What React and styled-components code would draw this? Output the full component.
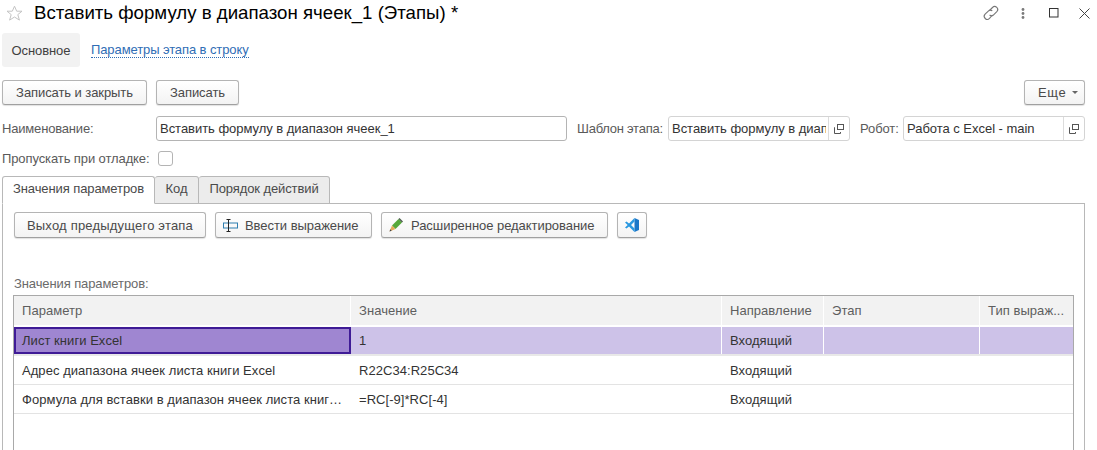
import React from "react";
import styled, { createGlobalStyle } from "styled-components";

const Global = createGlobalStyle`
  html, body { margin: 0; padding: 0; background: #fff; height: 450px; overflow: hidden; }
  body { font-family: "Liberation Sans", Arial, sans-serif; font-size: 13px; color: #4a4a4a; letter-spacing: -0.1px; }
  * { box-sizing: border-box; }
`;

const Page = styled.div`
  width: 1097px;
  height: 450px;
  overflow: hidden;
  display: flex;
  flex-direction: column;
  padding: 0 12px 0 2px;
`;
const TitleBar = styled.div`
  height: 28px;
  display: flex;
  align-items: center;
  padding: 0 0 2px 4px;
`;
const Title = styled.h1`
  margin: 0 0 0 11px;
  font-size: 18.67px;
  font-weight: 400;
  letter-spacing: 0;
  color: #000;
  flex: 1;
  white-space: nowrap;
`;
const WinIcons = styled.div`
  display: flex;
  align-items: center;
  margin-right: -13px;
`;
const WinIcon = styled.span`
  width: ${p => p.$w}px;
  height: 16px;
  display: flex;
  align-items: center;
  justify-content: center;
`;
const Sections = styled.div`
  height: 34px;
  margin-top: 5px;
  display: flex;
  align-items: center;
`;
const ActiveSection = styled.div`
  width: 78px;
  height: 34px;
  background: #f2f2f2;
  border-radius: 3px;
  display: flex;
  align-items: center;
  justify-content: center;
  color: #3f3f3f;
`;
const SectionLink = styled.a`
  margin: 1px 0 0 11px;
  color: #2f6db5;
  border-bottom: 1px dotted #2f6db5;
  line-height: 14px;
`;
const CommandBar = styled.div`
  margin-top: 13px;
  height: 25px;
  display: flex;
  gap: 9px;
`;
const Button = styled.button`
  height: ${p => p.$h || 25}px;
  width: ${p => p.$w}px;
  padding: 0 0 0 ${p => p.$pl || 0}px;
  margin-left: ${p => p.$push ? "auto" : "0"};
  border: 1px solid #b4b4b4;
  border-bottom-color: #a0a0a0;
  border-radius: 3px;
  background: linear-gradient(#ffffff, #f3f3f3);
  box-shadow: 0 1px 1px rgba(0,0,0,.12);
  font: 13px "Liberation Sans", Arial, sans-serif;
  letter-spacing: ${p => p.$ls ?? -0.08}px;
  color: #4a4a4a;
  display: flex;
  align-items: center;
  justify-content: ${p => p.$pl ? "flex-start" : "center"};
  gap: ${p => p.$gap || 0}px;
`;
const FormRow = styled.div`
  margin-top: 11px;
  height: 25px;
  display: flex;
  align-items: center;
`;
const Label = styled.label`
  width: ${p => p.$w}px;
  margin-left: ${p => p.$ml || 0}px;
  flex: none;
  white-space: nowrap;
  color: #5a5a5a;
  letter-spacing: ${p => p.$ls ?? -0.1}px;
`;
const Field = styled.div`
  width: ${p => p.$w}px;
  height: 25px;
  flex: none;
  border: 1px solid ${p => p.$light ? "#d4d4d4" : "#b4b4b4"};
  border-radius: 3px;
  display: flex;
  align-items: center;
  background: #fff;
  overflow: hidden;
`;
const FieldText = styled.span`
  flex: 1;
  min-width: 0;
  margin-right: 2px;
  padding-left: 3px;
  overflow: hidden;
  white-space: nowrap;
  color: #333;
  letter-spacing: -0.03px;
`;
const FieldBtn = styled.span`
  width: 21px;
  height: 100%;
  flex: none;
  border-left: 1px solid #dcdcdc;
  display: flex;
  align-items: center;
  justify-content: center;
`;
const CheckRow = styled.div`
  margin-top: 5px;
  height: 25px;
  display: flex;
  align-items: center;
`;
const Check = styled.span`
  width: 15px;
  height: 15px;
  border: 1px solid #b4b4b4;
  border-radius: 3px;
  background: #fff;
`;
const Tabs = styled.div`
  margin-top: 5px;
  height: 28px;
  display: flex;
  align-items: flex-end;
  position: relative;
  z-index: 1;
`;
const Tab = styled.div`
  width: ${p => p.$w}px;
  height: 28px;
  border: 1px solid #b8b8b8;
  border-left-width: ${p => p.$first ? 1 : 0}px;
  border-bottom: ${p => p.$on ? "1px solid #fff" : "1px solid #b8b8b8"};
  border-radius: 3px 3px 0 0;
  background: ${p => p.$on ? "#fff" : "#ececec"};
  display: flex;
  align-items: center;
  justify-content: center;
  color: #4a4a4a;
  padding-bottom: 3px;
`;
const Panel = styled.div`
  flex: 1;
  margin-top: -1px;
  border: 1px solid #b8b8b8;
  border-bottom: 0;
  padding: 8px 11px 0 11px;
  width: 1083px;
  display: flex;
  flex-direction: column;
`;
const PanelBar = styled.div`
  height: 26px;
  display: flex;
  gap: 9px;
`;
const TableCaption = styled.div`
  margin-top: 39px;
  height: 18px;
  line-height: 14px;
  color: #6a6a6a;
`;
const Table = styled.div`
  width: 1061px;
  margin-left: -1px;
  flex: 1;
  border: 1px solid #a9a9a9;
  border-bottom: 0;
`;
const Row = styled.div`
  display: grid;
  grid-template-columns: 337px 371px 102px 156px 1fr;
  height: ${p => p.$head ? 31 : 29}px;
  background: ${p => p.$head ? "#f2f2f2" : p.$sel ? "#cdc2e8" : "#fff"};
  border-bottom: ${p => p.$head ? "2px solid #fff" : p.$sel ? "2px solid #e8e8e8" : "1px solid #e3e3e3"};
`;
const Cell = styled.div`
  display: flex;
  align-items: center;
  padding-left: ${p => p.$focus ? "6px" : "8px"};
  padding-bottom: ${p => p.$head ? "1px" : "0"};
  min-width: 0;
  white-space: nowrap;
  letter-spacing: 0.05px;
  color: ${p => p.$head ? "#5e5e5e" : "#333"};
  border-right: ${p => p.$head || p.$sel ? "1px solid #fff" : "0"};
  ${p => p.$focus ? "background:#9f86d1;border:2px solid #3f1b96;" : ""}
  &:last-child { border-right: 0; }
`;

const Star = () => (
  <svg width="17" height="17" viewBox="0 0 17 17"><path d="M8.5 1.2l2.200 5h5.300l-4.200 3.400 1.600 5.500-4.900-3.100-4.900 3.100 1.600-5.500L1 6.200h5.300z" fill="none" stroke="#c4c4c4" /></svg>
);
const LinkIcon = () => (
  <svg width="18" height="18" viewBox="0 0 18 18" fill="none" stroke="#777" strokeWidth="1.1"><path d="M7.500 6.500l3-3a3 3 0 0 1 4.300 4.200l-3.200 3.100a3 3 0 0 1-4 .2" /><path d="M10.500 11l-3 3.400a3 3 0 0 1-4.400-4.200l3.200-3.100a3 3 0 0 1 4-.2" /></svg>
);
const Dots = () => (
  <svg width="4" height="11" viewBox="0 0 4 11" fill="#7a7a7a"><circle cx="2" cy="1.500" r="1.400" /><circle cx="2" cy="5.500" r="1.400" /><circle cx="2" cy="9.500" r="1.400" /></svg>
);
const Maximize = () => (
  <svg width="10" height="10" viewBox="0 0 10 10"><rect x=".5" y=".5" width="8.500" height="8.500" fill="none" stroke="#333" /></svg>
);
const Close = () => (
  <svg width="11" height="11" viewBox="0 0 11 11"><path d="M.5.5l10 10M10.500.5l-10 10" stroke="#444" /></svg>
);
const Caret = () => (
  <svg width="6" height="3" viewBox="0 0 6 3"><path d="M0 0h6L3 3z" fill="#666" /></svg>
);
const OpenIcon = () => (
  <svg width="10" height="10" viewBox="0 0 10 10" fill="none" stroke="#555"><rect x="3.500" y=".5" width="6" height="5" /><path d="M1 3.500h-.500v6h6V8" /></svg>
);
const ExprIcon = () => (
  <svg width="16" height="13" viewBox="0 0 16 13" fill="none"><rect x=".5" y="4" width="14" height="5" stroke="#2f7fb0" /><path d="M3.500.5h4M3.500 12.500h4M5.500.5v12" stroke="#222" /></svg>
);
const Pencil = () => (
  <svg width="14" height="14" viewBox="0 0 14 14"><path d="M3 7.500L9.500 1l3.500 3.500L6.500 11z" fill="#56a83a" /><path d="M9.500 1l1-1L14 3.500l-1 1z" fill="#4a5a4a" /><path d="M3 7.500L6.500 11 .5 13.500z" fill="#e6a95a" /><path d="M.5 13.500l.8-2.200 1.400 1.400z" fill="#444" /></svg>
);
const VSCode = () => (
  <svg width="14" height="14" viewBox="0 0 14 14"><path d="M9.500 0L14 2v10l-4.500 2z" fill="#1b77c8" /><path d="M9.500 0L4 5.500 1.500 3.500 0 4.500 2.700 7 0 9.500l1.500 1L4 8.500 9.500 14v-3.500L6 7l3.500-3.500z" fill="#2a98e0" /></svg>
);

const columns = ["Параметр", "Значение", "Направление", "Этап", "Тип выраж..."];

export default function App() {
  return (
    <Page>
      <Global />
      <TitleBar>
        <Star />
        <Title>Вставить формулу в диапазон ячеек_1 (Этапы) *</Title>
        <WinIcons>
          <WinIcon $w={35}><LinkIcon /></WinIcon>
          <WinIcon $w={29}><Dots /></WinIcon>
          <WinIcon $w={33}><Maximize /></WinIcon>
          <WinIcon $w={28}><Close /></WinIcon>
        </WinIcons>
      </TitleBar>
      <Sections>
        <ActiveSection>Основное</ActiveSection>
        <SectionLink>Параметры этапа в строку</SectionLink>
      </Sections>
      <CommandBar>
        <Button $w={145}>Записать и закрыть</Button>
        <Button $w={83}>Записать</Button>
        <Button $w={61} $push $gap={6} $pl={13} $ls={0.6}>Еще <Caret /></Button>
      </CommandBar>
      <FormRow>
        <Label $w={154} $ls={-0.18}>Наименование:</Label>
        <Field $w={411}><FieldText>Вставить формулу в диапазон ячеек_1</FieldText></Field>
        <Label $w={91} $ml={10} $ls={-0.25}>Шаблон этапа:</Label>
        <Field $w={182} $light><FieldText>Вставить формулу в диапазон</FieldText><FieldBtn><OpenIcon /></FieldBtn></Field>
        <Label $w={43} $ml={10}>Робот:</Label>
        <Field $w={182} $light><FieldText>Работа с Excel - main</FieldText><FieldBtn><OpenIcon /></FieldBtn></Field>
      </FormRow>
      <CheckRow>
        <Label $w={156}>Пропускать при отладке:</Label>
        <Check />
      </CheckRow>
      <Tabs>
        <Tab $w={153} $on $first>Значения параметров</Tab>
        <Tab $w={44}>Код</Tab>
        <Tab $w={131}>Порядок действий</Tab>
      </Tabs>
      <Panel>
        <PanelBar>
          <Button $w={192} $h={26} $ls={0.2}>Выход предыдущего этапа</Button>
          <Button $w={157} $h={26} $gap={6} $pl={7} $ls={-0.05}><ExprIcon />Ввести выражение</Button>
          <Button $w={227} $h={26} $gap={8} $pl={7} $ls={-0.05}><Pencil />Расширенное редактирование</Button>
          <Button $w={30} $h={26}><VSCode /></Button>
        </PanelBar>
        <TableCaption>Значения параметров:</TableCaption>
        <Table>
          <Row $head>
            {columns.map(c => <Cell key={c} $head>{c}</Cell>)}
          </Row>
          <Row $sel>
            <Cell $sel $focus>Лист книги Excel</Cell>
            <Cell $sel>1</Cell>
            <Cell $sel>Входящий</Cell>
            <Cell $sel />
            <Cell $sel />
          </Row>
          <Row>
            <Cell>Адрес диапазона ячеек листа книги Excel</Cell>
            <Cell>R22C34:R25C34</Cell>
            <Cell>Входящий</Cell>
            <Cell />
            <Cell />
          </Row>
          <Row>
            <Cell>Формула для вставки в диапазон ячеек листа книг…</Cell>
            <Cell>=RC[-9]*RC[-4]</Cell>
            <Cell>Входящий</Cell>
            <Cell />
            <Cell />
          </Row>
        </Table>
      </Panel>
    </Page>
  );
}
